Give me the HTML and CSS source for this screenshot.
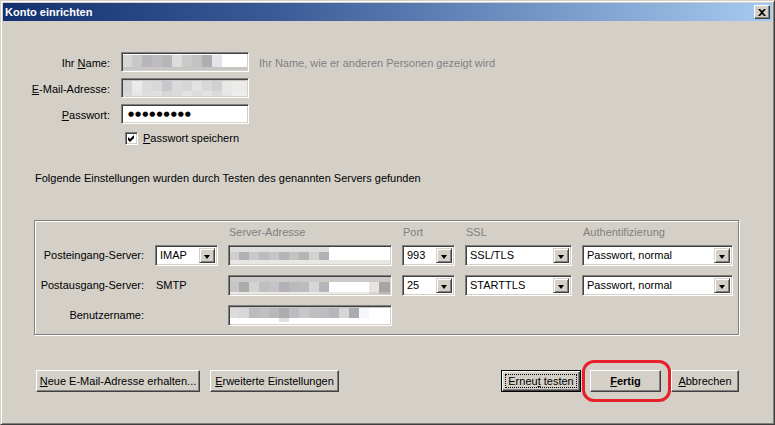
FILE: index.html
```html
<!doctype html>
<html>

<head>
  <title>Konto einrichten</title>
  <link rel="stylesheet" href="styles.css">
</head>

<body>
  <div class="window">
    <header class="titlebar">
      <span class="title">Konto einrichten</span>
      <button class="close" type="button">
        <svg width="8" height="7" viewBox="0 0 8 7"><path d="M0 0h2l2 2 2-2h2L5 3.5 8 7H6L4 5 2 7H0l3-3.5z" /></svg>
      </button>
    </header>

    <main class="content">
      <div class="identity">
        <label class="field-label">Ihr <u>N</u>ame:</label>
        <div class="textbox mosaic mosaic--name"></div>
        <span class="hint">Ihr Name, wie er anderen Personen gezeigt wird</span>

        <label class="field-label"><u>E</u>-Mail-Adresse:</label>
        <div class="textbox mosaic mosaic--mail"></div>
        <span></span>

        <label class="field-label"><u>P</u>asswort:</label>
        <div class="textbox password"><span class="dots">●●●●●●●●●</span></div>
        <span></span>

        <label class="check">
          <span class="checkbox">
            <svg width="9" height="9" viewBox="0 0 9 9"><path d="M1 3l2 2 4-4v3l-4 4-2-2z" /></svg>
          </span>
          <span><u>P</u>asswort speichern</span>
        </label>
      </div>

      <p class="found">Folgende Einstellungen wurden durch Testen des genannten Servers gefunden</p>

      <section class="groupbox">
        <div class="servers">
          <span></span>
          <span></span>
          <span class="col-head">Server-Adresse</span>
          <span class="col-head">Port</span>
          <span class="col-head">SSL</span>
          <span class="col-head">Authentifizierung</span>

          <span class="row-label">Posteingang-Server:</span>
          <div class="combo"><span class="combo-value">IMAP</span><span class="combo-btn"></span></div>
          <div class="textbox mosaic mosaic--in"></div>
          <div class="combo"><span class="combo-value">993</span><span class="combo-btn"></span></div>
          <div class="combo"><span class="combo-value">SSL/TLS</span><span class="combo-btn"></span></div>
          <div class="combo"><span class="combo-value">Passwort, normal</span><span class="combo-btn"></span></div>

          <span class="row-label">Postausgang-Server:</span>
          <span class="plain">SMTP</span>
          <div class="textbox mosaic mosaic--out"></div>
          <div class="combo"><span class="combo-value">25</span><span class="combo-btn"></span></div>
          <div class="combo"><span class="combo-value">STARTTLS</span><span class="combo-btn"></span></div>
          <div class="combo"><span class="combo-value">Passwort, normal</span><span class="combo-btn"></span></div>

          <span class="row-label">Benutzername:</span>
          <span></span>
          <div class="textbox mosaic mosaic--user"></div>
        </div>
      </section>

      <footer class="actions">
        <div class="btn-group">
          <button class="btn btn--new" type="button"><u>N</u>eue E-Mail-Adresse erhalten...</button>
          <button class="btn btn--advanced" type="button"><u>E</u>rweiterte Einstellungen</button>
        </div>
        <div class="btn-group btn-group--right">
          <button class="btn btn--focus btn--retest" type="button">Erneu<u>t</u> testen</button>
          <div class="highlight">
            <button class="btn btn--done" type="button"><u>F</u>ertig</button>
          </div>
          <button class="btn btn--cancel" type="button"><u>A</u>bbrechen</button>
        </div>
      </footer>
    </main>
  </div>
</body>

</html>
```

FILE: styles.css
```css
* {
  box-sizing: border-box;
  margin: 0;
  padding: 0;
  font: inherit;
  color: inherit;
}

html,
body {
  width: 775px;
  height: 425px;
  overflow: hidden;
}

body {
  font-family: "Liberation Sans", Arial, sans-serif;
  font-size: 11px;
  line-height: 13px;
  color: #000;
  background: #d4d0c8;

  --face: #d4d0c8;
  --shadow: #808080;
  --dark: #404040;
}

u {
  text-decoration: underline;
  text-underline-offset: 1px;
}

/** Window frame */
.window {
  width: 775px;
  height: 425px;
  padding: 2px;
  display: flex;
  flex-direction: column;

  border: 1px solid;
  border-color: var(--face) var(--dark) var(--dark) var(--face);
  box-shadow: inset 1px 1px #fff, inset -1px -1px var(--shadow);
}

.titlebar {
  height: 18px;
  display: flex;
  align-items: center;
  justify-content: space-between;
  padding: 0 2px;

  background: linear-gradient(to right, #13306f, #3a5a96 35%, #a6caf0);
  color: #fff;
}

.title {
  font-weight: bold;
}

.close {
  width: 16px;
  height: 14px;
  display: flex;
  align-items: center;
  justify-content: center;
  background: var(--face);

  border: 1px solid;
  border-color: #fff var(--dark) var(--dark) #fff;
  box-shadow: inset -1px -1px var(--shadow);
}

.close svg {
  fill: #000;
  margin-top: 1px;
}

.content {
  flex: 1;
  display: flex;
  flex-direction: column;
}

/** Sunken fields */
.textbox,
.combo,
.checkbox {
  background: #fff;
  border: 1px solid;
  border-color: var(--shadow) #fff #fff var(--shadow);
  box-shadow: inset 1px 1px var(--dark), inset -1px -1px var(--face);
}

/** Identity */
.identity {
  margin-top: 31px;
  display: grid;
  grid-template-columns: 108px 128px auto;
  grid-template-rows: repeat(3, 20px) 15px;
  column-gap: 10px;
  row-gap: 6px;
  align-items: center;
}

.field-label {
  text-align: right;
  padding: 2px 1px 0 0;
}

.hint {
  color: #808080;
  padding-top: 2px;
}

.password {
  display: flex;
  align-items: center;
  padding-left: 6px;
}

.dots {
  font-family: "DejaVu Sans", sans-serif;
  font-size: 7px;
  line-height: 7px;
  letter-spacing: 1px;
}

.check {
  grid-column: 2 / span 2;
  display: flex;
  align-items: center;
  gap: 5px;
  margin-left: 4px;
  margin-top: 2px;
  height: 13px;
  align-self: start;
}

.checkbox {
  width: 13px;
  height: 13px;
  display: flex;
  align-items: center;
  justify-content: center;
}

.checkbox svg {
  fill: #000;
}

.found {
  margin: 27px 0 0 32px;
}

/** Server group */
.groupbox {
  margin: 35px 0 0 31px;
  width: 705px;
  padding: 5px 0 8px 1px;

  border: 1px solid var(--shadow);
  box-shadow: inset 1px 1px #fff, 1px 1px #fff;
}

.servers {
  display: grid;
  grid-template-columns: 109px 63px 164px 53px 107px 151px;
  grid-template-rows: 10px repeat(3, 21px);
  column-gap: 10px;
  row-gap: 9px;
  align-items: center;
}

.col-head {
  align-self: start;
  color: #808080;
  padding-left: 1px;
  white-space: nowrap;
}

.row-label {
  text-align: right;
  padding-right: 1px;
  white-space: nowrap;
}

.plain {
  padding-left: 1px;
}

.textbox,
.combo {
  height: 100%;
}

.combo {
  display: flex;
  align-items: stretch;
  padding: 2px;
}

.combo-value {
  flex: 1;
  padding-left: 2px;
  display: flex;
  align-items: center;
  white-space: nowrap;
  overflow: hidden;
}

.combo-btn {
  width: 16px;
  background: var(--face);
  border: 1px solid;
  border-color: var(--face) var(--dark) var(--dark) var(--face);
  box-shadow: inset 1px 1px #fff, inset -1px -1px var(--shadow);
  position: relative;
}

.combo-btn::after {
  content: "";
  position: absolute;
  left: 4px;
  top: 6px;
  border-style: solid;
  border-width: 4px 3.5px 0;
  border-color: #000 transparent transparent;
}

/** Pixelated (blurred) personal data */
.mosaic {
  background-repeat: no-repeat;
}

.mosaic--name {
  background-image:
    linear-gradient(#c8c6c4, #c8c6c4),
    linear-gradient(to right, #d6d6d6 0 10px, #c8c8c8 10px 20px, #b8b6ba 20px 30px, #bdbcc0 30px 40px, #b6b6b8 40px 50px, #dcdcdc 50px 60px, #c9c9c9 60px 70px, #c2c2c2 70px 80px, #afadb0 80px 90px, #e2e4e8 90px 100px, #fff 100px);
  background-size: 100% 4px, 100% 12px;
  background-position: 0 100%, 0 2px;
}

.mosaic--mail {
  background-image:
    linear-gradient(#c8c6c4, #c8c6c4),
    linear-gradient(to right, #d4d4d6 0 10px, #ecebea 10px 20px, #dcdcdc 20px 30px, #d8d8d8 30px 40px, #c8c8cc 40px 50px, #dadada 50px 60px, #d6d6d6 60px 70px, #e2e2e2 70px 80px, #d8d8d8 80px 90px, #d0d0d0 90px 100px, #e8e8e8 100px 110px, #ecebe8 110px),
    linear-gradient(to right, #d8d8d8 0 10px, #e6e6e6 10px 20px, #dedede 20px 30px, #e0e0e0 30px 40px, #d6d6d8 40px 50px, #dadada 50px 60px, #e2e2e2 60px 70px, #dcdcdc 70px 80px, #e4e4e4 80px 90px, #dadada 90px 100px, #e6e6e6 100px 110px, #eeeeee 110px);
  background-size: 100% 2px, 100% 10px, 100% 8px;
  background-position: 0 0, 0 2px, 0 12px;
}

.mosaic--in {
  background-image:
    linear-gradient(#e8e6e2, #e8e6e2),
    linear-gradient(to right, #cfcfcf 0 10px, #b1b1b4 10px 20px, #c9c9c9 20px 30px, #bcbcc0 30px 40px, #c6c6c6 40px 50px, #b4b4b8 50px 60px, #c2c2c2 60px 70px, #b5b5b5 70px 80px, #d2d2d2 80px 90px, #b2b2b6 90px 100px, #fff 100px),
    linear-gradient(to right, #dedede 0 100px, #fff 100px);
  background-size: 100% 5px, 100% 10px, 100% 5px;
  background-position: 0 100%, 0 6px, 0 1px;
}

.mosaic--out {
  background-image:
    linear-gradient(#cccac6, #cccac6),
    linear-gradient(to right, #c6c6c6 0 10px, #acacae 10px 20px, #d2d4d0 20px 30px, #bfbfbf 30px 40px, #c4c4c8 40px 50px, #b2b0b4 50px 60px, #bababc 60px 70px, #bcbcbc 70px 80px, #d6d6d8 80px 90px, #b6b6ba 90px 100px, #fff 100px 140px, #e6e4e0 140px 150px, #a8a4a0 150px),
    linear-gradient(to right, #eae8e4 0 140px, #d6d4d0 140px 150px, #bab6b2 150px);
  background-size: 100% 6px, 100% 10px, 100% 6px;
  background-position: 0 0, 0 6px, 0 100%;
}

.mosaic--user {
  background-image:
    linear-gradient(#c8c6c2, #c8c6c2),
    linear-gradient(to right, #dcdcdc 0 10px, #d8d6d6 10px 20px, #bcbcc0 20px 30px, #c0c0c0 30px 40px, #b8b8bc 40px 50px, #acacac 50px 60px, #bcbcc0 60px 70px, #c8c8c8 70px 80px, #c0c0c0 80px 90px, #bcbcc4 90px 100px, #b6b6b8 100px 110px, #d6d6d8 110px 120px, #ababab 120px 130px, #f4f8fc 130px 140px, #fff 140px),
    linear-gradient(to right, #fff 0 50px, #e0e0e0 50px 60px, #fff 60px);
  background-size: 100% 2px, 100% 10px, 100% 4px;
  background-position: 0 0, 0 2px, 0 12px;
}

/** Buttons */
.actions {
  margin: 35px 33px 0;
  display: flex;
  justify-content: space-between;
}

.btn-group {
  display: flex;
  gap: 10px;
}

.btn-group--right {
  gap: 9px;
}

.btn {
  height: 22px;
  background: var(--face);
  white-space: nowrap;

  border: 1px solid;
  border-color: #fff var(--dark) var(--dark) #fff;
  box-shadow: inset -1px -1px var(--shadow), inset 1px 1px var(--face);
}

.btn--new {
  width: 164px;
}

.btn--advanced {
  width: 129px;
}

.btn--retest {
  width: 80px;
}

.btn--done {
  width: 71px;
  font-weight: bold;
}

.btn--cancel {
  width: 68px;
  margin-left: 1px;
}

.btn--focus {
  position: relative;
  border-color: #000;
  box-shadow: inset 1px 1px #fff, inset -1px -1px var(--dark), inset -2px -2px var(--shadow);
}

.btn--focus::after {
  content: "";
  position: absolute;
  top: 3px;
  right: 3px;
  bottom: 3px;
  left: 3px;
  border: 1px dotted #000;
}

/* Red marker drawn round the "Fertig" button */
.highlight {
  position: relative;
}

.highlight::after {
  content: "";
  position: absolute;
  top: -10px;
  right: -10px;
  bottom: -10px;
  left: -8px;
  border: 3.5px solid #e8202a;
  border-radius: 12px;
  pointer-events: none;
}
```
